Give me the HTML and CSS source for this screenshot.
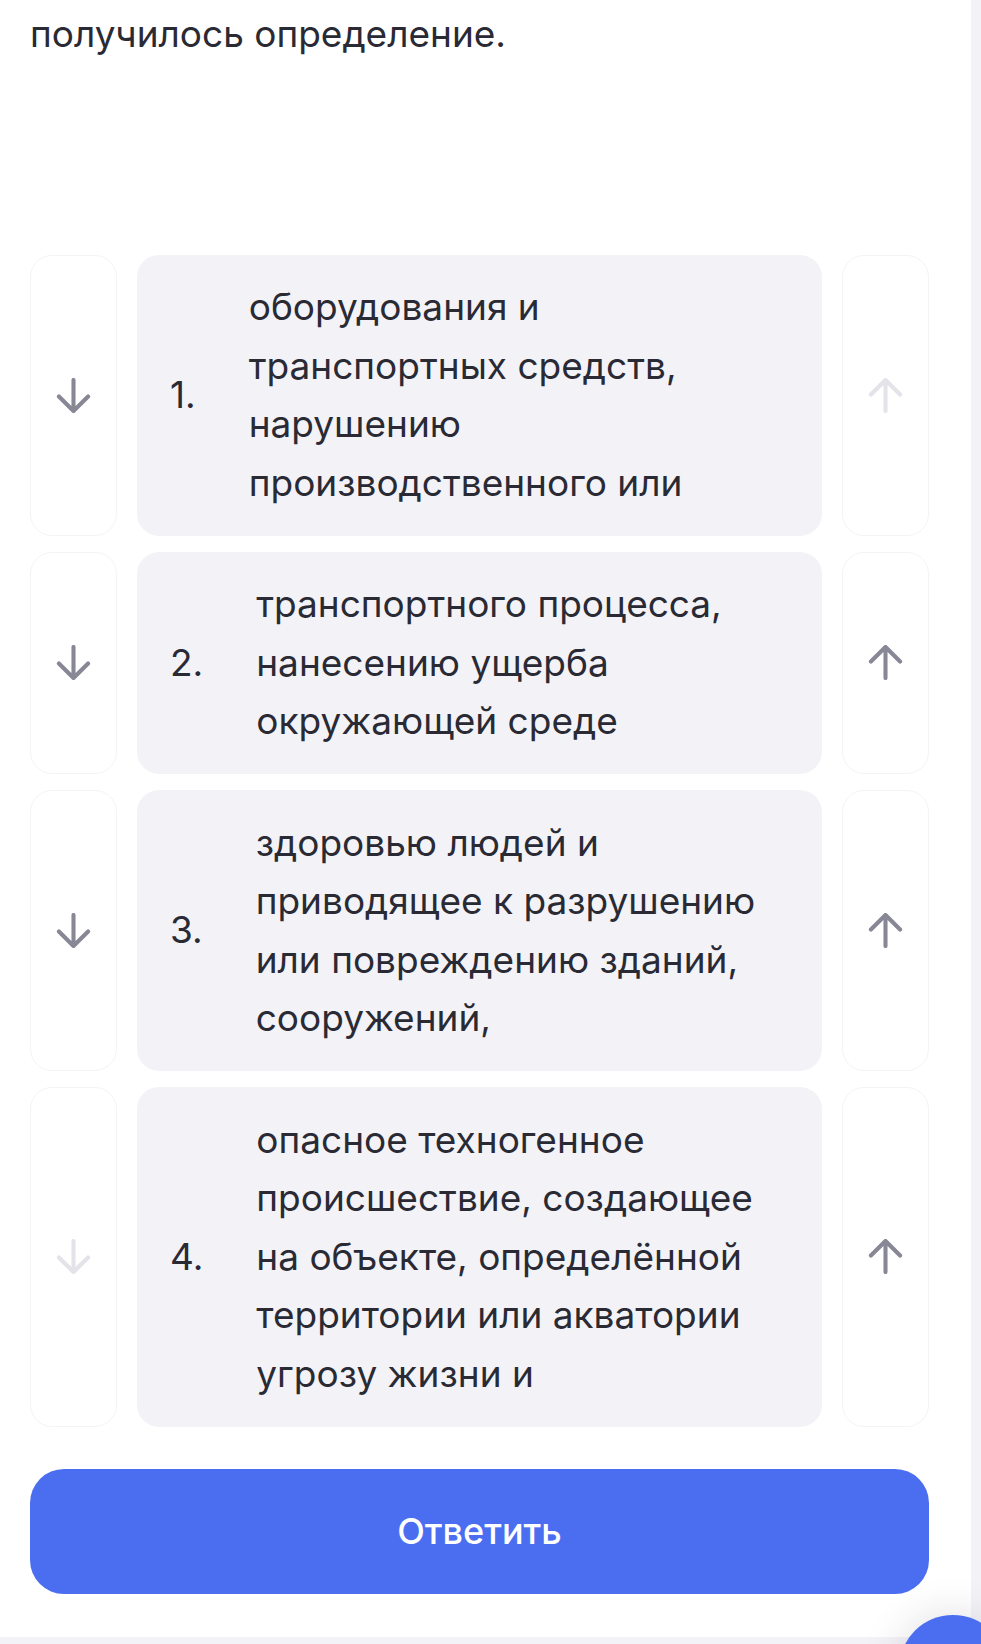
FILE: index.html
```html
<!DOCTYPE html>
<html lang="ru">

<head>
    <meta charset="UTF-8">
    <meta name="viewport" content="width=device-width, initial-scale=1.0">
    <title>Упорядочить определение</title>
    <link rel="stylesheet" href="styles.css">
</head>

<body>
    <div class="page">
        <p class="task-text">получилось определение.</p>

        <!-- Sortable answer rows -->
        <div class="order-list">
            <div class="order-row">
                <button class="move-btn" aria-label="Вниз">
                    <svg class="arrow" viewBox="0 0 36 36"><path d="M18 2v32M3 19l15 15 15-15" /></svg>
                </button>
                <div class="order-card">
                    <span class="order-num">1.</span>
                    <span class="order-text">оборудования и транспортных средств, нарушению производственного или</span>
                </div>
                <button class="move-btn disabled" aria-label="Вверх">
                    <svg class="arrow" viewBox="0 0 36 36"><path d="M18 34V2M3 17L18 2l15 15" /></svg>
                </button>
            </div>

            <div class="order-row">
                <button class="move-btn" aria-label="Вниз">
                    <svg class="arrow" viewBox="0 0 36 36"><path d="M18 2v32M3 19l15 15 15-15" /></svg>
                </button>
                <div class="order-card">
                    <span class="order-num">2.</span>
                    <span class="order-text">транспортного процесса, нанесению ущерба окружающей среде</span>
                </div>
                <button class="move-btn" aria-label="Вверх">
                    <svg class="arrow" viewBox="0 0 36 36"><path d="M18 34V2M3 17L18 2l15 15" /></svg>
                </button>
            </div>

            <div class="order-row">
                <button class="move-btn" aria-label="Вниз">
                    <svg class="arrow" viewBox="0 0 36 36"><path d="M18 2v32M3 19l15 15 15-15" /></svg>
                </button>
                <div class="order-card">
                    <span class="order-num">3.</span>
                    <span class="order-text">здоровью людей и приводящее к разрушению или повреждению зданий, сооружений,</span>
                </div>
                <button class="move-btn" aria-label="Вверх">
                    <svg class="arrow" viewBox="0 0 36 36"><path d="M18 34V2M3 17L18 2l15 15" /></svg>
                </button>
            </div>

            <div class="order-row">
                <button class="move-btn disabled" aria-label="Вниз">
                    <svg class="arrow" viewBox="0 0 36 36"><path d="M18 2v32M3 19l15 15 15-15" /></svg>
                </button>
                <div class="order-card">
                    <span class="order-num">4.</span>
                    <span class="order-text">опасное техногенное происшествие, создающее на объекте, определённой территории или акватории угрозу жизни и</span>
                </div>
                <button class="move-btn" aria-label="Вверх">
                    <svg class="arrow" viewBox="0 0 36 36"><path d="M18 34V2M3 17L18 2l15 15" /></svg>
                </button>
            </div>
        </div>

        <button class="answer-btn">Ответить</button>
    </div>

    <!-- Floating action button -->
    <div class="fab"></div>
</body>

</html>
```

FILE: styles.css
```css
* {
    box-sizing: border-box;
}

html,
body {
    margin: 0;
    height: 100%;
    overflow: hidden;
}

body {
    background-color: #f3f3f7;
    font-family: Inter, "Noto Sans", sans-serif;
    color: #2a2a35;
    position: relative;
}

.page {
    width: 971px;
    height: 1637px;
    background-color: white;
    padding: 5px 42px 0 30px;
}

.task-text {
    margin: 0;
    font-size: 37px;
    line-height: 58.5px;
}

.order-list {
    display: flex;
    flex-direction: column;
    gap: 16px;
    margin-top: 191px;
}

.order-row {
    display: flex;
    gap: 20px;
}

.move-btn {
    width: 87px;
    flex-shrink: 0;
    display: flex;
    align-items: center;
    justify-content: center;
    background-color: white;
    border: 1.5px solid #f4f4f7;
    border-radius: 22px;
    padding: 0;
    cursor: pointer;
}

.arrow {
    width: 35px;
    height: 35px;
    fill: none;
    stroke: #878796;
    stroke-width: 4.2;
    stroke-linecap: round;
    stroke-linejoin: round;
}

.move-btn.disabled .arrow {
    stroke: #e3e3e9;
}

.order-card {
    flex: 1;
    display: flex;
    align-items: center;
    gap: 53px;
    background-color: #f3f3f7;
    border-radius: 22px;
    padding: 23.5px 40px 23.5px 33px;
    font-size: 37px;
    line-height: 58.5px;
}

.order-num {
    flex-shrink: 0;
}

.answer-btn {
    display: block;
    width: 899px;
    height: 125px;
    margin-top: 42px;
    background-color: #4b6ef1;
    color: white;
    border: none;
    border-radius: 34px;
    font-family: Inter, "Noto Sans", sans-serif;
    font-size: 36px;
    font-weight: 500;
    cursor: pointer;
}

.fab {
    position: absolute;
    left: 899px;
    top: 1615px;
    width: 108px;
    height: 108px;
    border-radius: 50%;
    background-color: #4b6ef1;
    box-shadow: 0 0 40px rgba(40, 40, 70, 0.15);
}
```
